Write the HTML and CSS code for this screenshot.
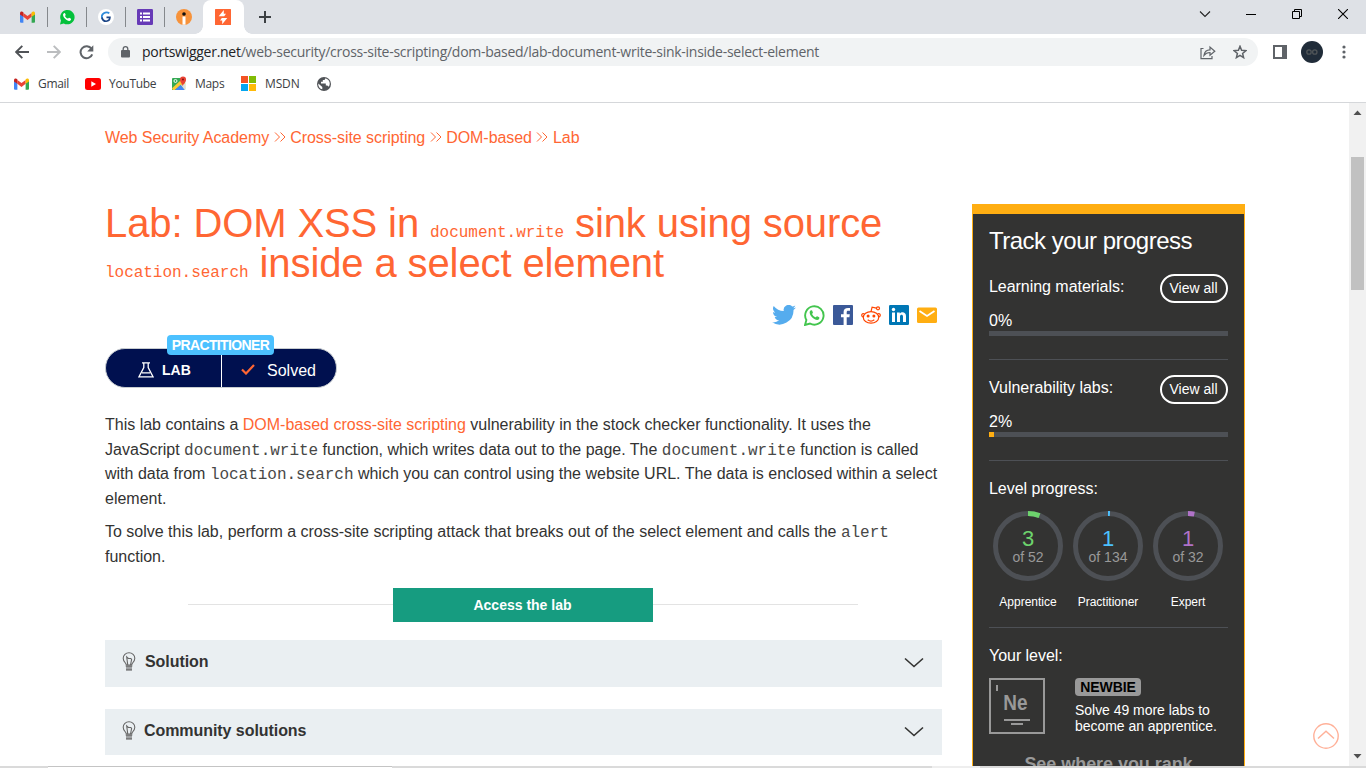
FILE: index.html
```html
<!DOCTYPE html>
<html lang="en">
<head>
<meta charset="utf-8">
<title>Lab: DOM XSS in document.write sink</title>
<link rel="stylesheet" href="styles.css">
</head>
<body>
<svg class="defs" width="0" height="0">
  <symbol id="gmail" viewBox="0 0 16 12">
    <path d="M0 1.8V11a1 1 0 0 0 1 1h2.6V5z" fill="#4285f4"/>
    <path d="M16 1.8V11a1 1 0 0 1-1 1h-2.6V5z" fill="#34a853"/>
    <path d="M3.6 1.6 8 5l4.4-3.4v4.2L8 9.2 3.600 5.800z" fill="#ea4335"/>
    <path d="M0 2C0 .2 2 -.4 3.600 1v4.800L0 3.200z" fill="#c5221f"/>
    <path d="M16 2C16 .2 14 -.4 12.400 1v4.800L16 3.200z" fill="#fbbc04"/>
  </symbol>
  <symbol id="bulb" viewBox="0 0 14 19">
    <path d="M4.300 13C4.300 10.800 1.200 9.800 1.200 6.200a5.800 5.400 0 0 1 11.600 0C12.800 9.800 9.700 10.800 9.700 13zM5.700 12.500 4.700 5l1.700 1.500h2.400l.8 1-1 5" fill="none" stroke="#666" stroke-width="1.100"/>
    <path d="M3.800 14.200h6.400M4 16h6M4 17.800h6" stroke="#555" stroke-width="1.200"/>
  </symbol>
</svg>

<header class="tabs">
  <div class="tab"><svg width="15" height="12"><use href="#gmail"/></svg></div>
  <div class="tab"><svg width="16" height="16" viewBox="0 0 16 16"><path d="M1 15.500 2 11.500A7.200 7.200 0 1 1 4.800 14.400z" fill="#05c13c"/><path d="M5.300 3.900c-2 .8-1.400 3.500.6 5.600 2.200 2.400 4.800 3.300 5.900 1.500.5-1 .3-1.300-.2-1.500l-1.500-.7c-.6-.2-.8.9-1.300.8-1.300-.3-2.500-1.600-2.800-2.600 0-.4.9-.7.700-1.300L6 4.200q-.2-.4-.7-.3z" fill="#fff"/></svg></div>
  <div class="tab"><svg width="16" height="16" viewBox="0 0 16 16"><circle cx="8" cy="8" r="8" fill="#fff"/><path d="M11.300 4.200C8 1.800 2.200 5 4.300 9.800" fill="none" stroke="#2e8bda" stroke-width="1.700"/><path d="M4 8.500C5 13.800 11.800 13.200 11.900 8.300H8.500" fill="none" stroke="#1c4587" stroke-width="1.700"/></svg></div>
  <div class="tab"><svg width="16" height="16" viewBox="0 0 16 16"><rect width="16" height="16" rx="1.200" fill="#673ab7"/><path d="M3 4.500h2M3 8h2M3 11.500h2M6 4.500h7M6 8h7M6 11.500h7" stroke="#fff" stroke-width="1.800"/></svg></div>
  <div class="tab last"><svg width="16" height="16" viewBox="0 0 16 16"><circle cx="8" cy="8" r="8" fill="#f7923a"/><circle cx="8" cy="5" r="1.800" fill="#111"/><path d="M6.500 7.500h3v8.200h-3z" fill="#fff"/></svg></div>
  <div class="tab active"><svg width="16" height="16" viewBox="0 0 16 16"><rect width="16" height="16" rx=".5" fill="#ff6633"/><path d="M8.800 1v3.700H11L9.200 7.300H3.700zM7.200 15.200v-3.700H5L6.800 8.900h5.500z" fill="#fff"/></svg></div>
  <svg class="plus" width="12" height="12" viewBox="0 0 12 12"><path d="M6 0v12M0 6h12" stroke="#3c4043" stroke-width="2"/></svg>
  <div class="window">
    <svg width="12" height="8" viewBox="0 0 12 8"><path d="M1 1.500 6 6.500 11 1.500" fill="none" stroke="#222" stroke-width="1.100"/></svg>
    <svg width="10" height="10" viewBox="0 0 10 10"><path d="M0 5.500h10" stroke="#000"/></svg>
    <svg width="10" height="10" viewBox="0 0 10 10"><path d="M.5 2.500h7v7h-7zM2.500 2V.5h7v7H8" fill="none" stroke="#000"/></svg>
    <svg width="10" height="10" viewBox="0 0 10 10"><path d="m0 0 10 10M10 0 0 10" stroke="#000" stroke-width="1.100"/></svg>
  </div>
</header>

<div class="toolbar">
  <svg width="14" height="14" viewBox="0 0 14 14"><path d="M14 7H1.500M7.300.8 1.200 7l6.100 6.200" fill="none" stroke="#505357" stroke-width="1.900"/></svg>
  <svg class="fwd" width="14" height="14" viewBox="0 0 14 14"><path d="M0 7h12.500M6.700.8 12.800 7l-6.100 6.200" fill="none" stroke="#bbbdbf" stroke-width="1.900"/></svg>
  <svg class="reload" width="15" height="15" viewBox="0 0 15 15"><path d="M12.500 3.800A6 6 0 1 0 13.200 9.300" fill="none" stroke="#5f6368" stroke-width="2"/><path d="M14.300.3v6.100H8.200z" fill="#5f6368"/></svg>
  <div class="omnibox">
    <svg width="9" height="12" viewBox="0 0 9 12"><rect y="4" width="9" height="7.500" rx="1" fill="#5f6368"/><path d="M2.200 4.500V3a2.300 2.300 0 0 1 4.600 0v1.500" fill="none" stroke="#5f6368" stroke-width="1.300"/></svg>
    <span class="url"><b>portswigger.net</b>/web-security/cross-site-scripting/dom-based/lab-document-write-sink-inside-select-element</span>
    <svg class="share" width="16" height="15" viewBox="0 0 16 15"><path d="M3.500 3.500H1v10.200h11V11M4 10.300c.5-4 2.500-5.500 6-5.500V2l4.800 4.200-4.800 4V7.500c-2.500 0-4.300.5-6 2.800z" fill="none" stroke="#5f6368" stroke-width="1.200"/></svg>
    <svg class="star" width="14" height="14" viewBox="0 0 14 14"><path d="m7 1.300 1.600 4 4.300.3-3.300 2.800 1 4.200L7 10.300l-3.600 2.300 1-4.200L1.100 5.600l4.300-.3z" fill="none" stroke="#5f6368" stroke-width="1.500"/></svg>
  </div>
  <svg class="panel" width="14" height="14" viewBox="0 0 14 14"><path d="M1 1h12v12H1z" fill="#fff" stroke="#5f6368" stroke-width="2"/><path d="M9 1h4v12H9z" fill="#5f6368"/></svg>
  <svg class="avatar" width="22" height="22" viewBox="0 0 22 22"><circle cx="11" cy="11" r="11" fill="#202c39"/><circle cx="8" cy="11" r="2.200" fill="none" stroke="#505558" stroke-width="1.300"/><circle cx="13.800" cy="11" r="2.200" fill="none" stroke="#505558" stroke-width="1.300"/></svg>
  <svg class="menu" width="4" height="14" viewBox="0 0 4 14"><g fill="#5f6368"><circle cx="2" cy="2" r="1.600"/><circle cx="2" cy="7" r="1.600"/><circle cx="2" cy="12" r="1.600"/></g></svg>
</div>

<nav class="bookmarks">
  <a class="bm gm"><svg width="15" height="12"><use href="#gmail"/></svg><span>Gmail</span></a>
  <a class="bm yt"><svg width="16" height="12" viewBox="0 0 16 12"><rect width="16" height="12" rx="2.500" fill="#f00"/><path d="M6.300 3.300v5.400L11 6z" fill="#fff"/></svg><span>YouTube</span></a>
  <a class="bm mp"><svg width="15" height="15" viewBox="0 0 16 16"><rect y="2" width="14" height="13" rx="1" fill="#34a853"/><path d="M0 13 10 4l4 4v6l-4-5-7 6H1z" fill="#fbc934"/><path d="m3 15 6-5.500 5 5.500z" fill="#4285f4"/><path d="m9.500 9.500 4 5.500h.5V8z" fill="#ddd"/><circle cx="3.700" cy="5.300" r="1.600" fill="none" stroke="#fff" stroke-width="1"/><path d="M11.500 11C11 8 8.500 7 8.500 3.800a3.200 3.200 0 0 1 6.500 0C15 7 12 8 11.500 11z" fill="#ea4335"/><circle cx="11.700" cy="3.800" r="1.100" fill="#811"/></svg><span>Maps</span></a>
  <a class="bm ms"><svg width="15" height="15" viewBox="0 0 15 15"><path d="M0 0h7v7H0z" fill="#f35325"/><path d="M8 0h7v7H8z" fill="#81bc06"/><path d="M0 8h7v7H0z" fill="#05a6f0"/><path d="M8 8h7v7H8z" fill="#ffba08"/></svg><span>MSDN</span></a>
  <svg class="globe" width="14" height="14" viewBox="0 0 14 14"><circle cx="7" cy="7" r="7" fill="#505357"/><path d="M8.500 1.300 7.500 3H5.800v1.800H4v1.700h4.800v2h1.500l1.500 1.300c2-3 1-7-3.300-8.500zM1.300 6.500l4 3.500v2.300C3 12 1 9.500 1.300 6.500z" fill="#fff"/></svg>
</nav>

<div class="viewport">
  <div class="page">
    <main>
      <div class="crumbs">
        <span>Web Security Academy</span>
        <svg width="12" height="10" viewBox="0 0 12 10"><path d="m1 .5 4.500 4.500L1 9.500M6.500.5 11 5 6.500 9.500" fill="none" stroke="#ff6633"/></svg>
        <span>Cross-site scripting</span>
        <svg width="12" height="10" viewBox="0 0 12 10"><path d="m1 .5 4.500 4.500L1 9.500M6.500.5 11 5 6.500 9.500" fill="none" stroke="#ff6633"/></svg>
        <span>DOM-based</span>
        <svg width="12" height="10" viewBox="0 0 12 10"><path d="m1 .5 4.500 4.500L1 9.500M6.500.5 11 5 6.500 9.500" fill="none" stroke="#ff6633"/></svg>
        <span>Lab</span>
      </div>
      <h1>Lab: DOM XSS in <code>document.write</code> sink using source<br><code>location.search</code> inside a select element</h1>
      <div class="social">
        <svg width="24" height="20" viewBox="0 0 24 20"><path d="M24 2.400a10 10 0 0 1-2.800.8A5 5 0 0 0 23.300.4a10 10 0 0 1-3.100 1.200 4.900 4.900 0 0 0-8.400 4.500A14 14 0 0 1 1.700.9a4.900 4.900 0 0 0 1.500 6.600 5 5 0 0 1-2.200-.6c0 2.400 1.600 4.400 3.900 4.900a5 5 0 0 1-2.200.1 4.900 4.900 0 0 0 4.600 3.400A10 10 0 0 1 0 17.300a14 14 0 0 0 21.500-12.400q1.500-1.100 2.500-2.500z" fill="#55acee"/></svg>
        <svg width="21" height="21" viewBox="0 0 21 21"><path d="m1 20 1.400-5A9.200 9.200 0 1 1 6 18.500z" fill="none" stroke="#43c54e" stroke-width="1.900"/><path d="M7 5.300c-2.400 1.200-1.200 4.700 1.300 7.200 2.700 2.600 5.600 3.400 6.800 1.400.6-1.400.2-1.600-.4-1.900l-1.600-.8c-.7-.2-1 1.200-1.500 1.100-1.600-.5-3-1.900-3.500-3.200 0-.5 1-.9.800-1.500L8.100 5.600q-.3-.6-1.100-.3z" fill="#43c54e"/></svg>
        <svg width="20" height="20" viewBox="0 0 20 20"><rect width="20" height="20" rx="1" fill="#3b5998"/><path d="M13.700 20v-7.700h2.700l.4-3h-3.100v-2c0-.9.300-1.500 1.500-1.500H17V3.100c-4-.6-6.400.5-6.400 3.800v2.400H8v3h2.600V20z" fill="#fff"/></svg>
        <svg width="20" height="20" viewBox="0 0 20 20"><g fill="none" stroke="#ff4500" stroke-width="1.200"><ellipse cx="10" cy="12.400" rx="7.700" ry="5.800"/><path d="M3.500 9.200C1.800 7.200-.6 10 1.900 12.100M16.500 9.200c1.700-2 4.100.8 1.600 2.900M10 6.600l1.100-4.500 4.300 1M6.700 14.700c2 1.600 4.600 1.600 6.600 0"/><circle cx="17" cy="3.300" r="1.500"/></g><circle cx="7.100" cy="11" r="1.500" fill="#ff4500"/><circle cx="12.900" cy="11" r="1.500" fill="#ff4500"/></svg>
        <svg width="20" height="20" viewBox="0 0 20 20"><rect width="20" height="20" rx="1.200" fill="#0077b5"/><path d="M3 7.500h3V17H3zM8 7.500h2.800v1.300C12.500 6.300 17 7 17 11v6h-3v-5.500c0-2.500-3-2.300-3 0V17H8z" fill="#fff"/><circle cx="4.500" cy="4.500" r="1.700" fill="#fff"/></svg>
        <svg width="20" height="20" viewBox="0 0 20 20"><rect y="2.500" width="20" height="15.500" rx="1.500" fill="#ffae12"/><path d="m2.500 6 7.500 5 7.500-5" fill="none" stroke="#fff" stroke-width="1.800"/></svg>
      </div>
      <div class="status">
        <div class="half lab"><svg width="16" height="16" viewBox="0 0 16 16"><path d="M4 .8h8M5.800 1v4.500L1 14.800h14L10.200 5.500V1M4 10.800h8" fill="none" stroke="#fff" stroke-width="1.300"/></svg><b>LAB</b></div>
        <div class="half solved"><svg width="14" height="11" viewBox="0 0 14 11"><path d="m1 5.500 4 4L13 1" fill="none" stroke="#ff6633" stroke-width="2.200"/></svg><span>Solved</span></div>
        <span class="rank">PRACTITIONER</span>
      </div>
      <p class="p1">This lab contains a <a>DOM-based cross-site scripting</a> vulnerability in the stock checker functionality. It uses the<br>JavaScript <code>document.write</code> function, which writes data out to the page. The <code>document.write</code> function is called<br>with data from <code>location.search</code> which you can control using the website URL. The data is enclosed within a select<br>element.</p>
      <p class="p2">To solve this lab, perform a cross-site scripting attack that breaks out of the select element and calls the <code>alert</code><br>function.</p>
      <div class="access"><i></i><button>Access the lab</button><i></i></div>
      <div class="fold"><svg width="14" height="19"><use href="#bulb"/></svg><b>Solution</b><svg class="chev" width="20" height="12" viewBox="0 0 20 12"><path d="m1 1.500 9 8 9-8" fill="none" stroke="#333332" stroke-width="1.600"/></svg></div>
      <div class="fold second"><svg width="14" height="19"><use href="#bulb"/></svg><b>Community solutions</b><svg class="chev" width="20" height="12" viewBox="0 0 20 12"><path d="m1 1.500 9 8 9-8" fill="none" stroke="#333332" stroke-width="1.600"/></svg></div>
    </main>
    <aside>
      <h2>Track your progress</h2>
      <section class="prog">
        <div class="row"><span>Learning materials:</span><button>View all</button></div>
        <div class="pct">0%</div>
        <div class="bar"></div>
      </section>
      <section class="prog">
        <div class="row"><span>Vulnerability labs:</span><button>View all</button></div>
        <div class="pct">2%</div>
        <div class="bar"><i style="width:2%"></i></div>
      </section>
      <section class="levels">
        <div class="cap">Level progress:</div>
        <div class="rings">
          <div class="ring green"><div class="dial"><svg width="70" height="70" viewBox="0 0 70 70"><circle cx="35" cy="35" r="32.500"/><circle class="val" cx="35" cy="35" r="32.500" pathLength="52" stroke-dasharray="3 49"/></svg><b>3</b><span>of 52</span></div><em>Apprentice</em></div>
          <div class="ring blue"><div class="dial"><svg width="70" height="70" viewBox="0 0 70 70"><circle cx="35" cy="35" r="32.500"/><circle class="val" cx="35" cy="35" r="32.500" pathLength="134" stroke-dasharray="1.300 132.700"/></svg><b>1</b><span>of 134</span></div><em>Practitioner</em></div>
          <div class="ring purple"><div class="dial"><svg width="70" height="70" viewBox="0 0 70 70"><circle cx="35" cy="35" r="32.500"/><circle class="val" cx="35" cy="35" r="32.500" pathLength="32" stroke-dasharray="1 31"/></svg><b>1</b><span>of 32</span></div><em>Expert</em></div>
        </div>
      </section>
      <section class="level">
        <div class="cap">Your level:</div>
        <div class="who">
          <div class="badge"><u></u><b>Ne</b><i class="l1"></i><i class="l2"></i></div>
          <div class="desc"><span class="newbie">NEWBIE</span><p>Solve 49 more labs to<br>become an apprentice.</p></div>
        </div>
        <div class="see">See where you rank</div>
      </section>
    </aside>
    <svg class="top" width="26" height="26" viewBox="0 0 26 26"><circle cx="13" cy="13" r="12.200" fill="none" stroke="#ffb199" stroke-width="1.400"/><path d="m5 15.500 8-7.300 8 7.300" fill="none" stroke="#ffb199" stroke-width="1.400"/></svg>
  </div>
  <div class="scroll">
    <svg width="9" height="5" viewBox="0 0 9 5"><path d="M4.500.5 8.500 5h-8z" fill="#505050"/></svg>
    <div class="thumb"></div>
    <svg class="down" width="9" height="5" viewBox="0 0 9 5"><path d="M4.500 4.500 8.500 0h-8z" fill="#505050"/></svg>
  </div>
</div>
<footer><i></i><b></b><u></u><s></s></footer>
</body>
</html>
```

FILE: styles.css
```css
* { box-sizing: border-box; }
body { margin: 0; width: 1366px; height: 768px; overflow: hidden; display: flex; flex-direction: column; background: #fff; color: #333332; font: 16px "Liberation Sans", Arial, sans-serif; }
svg { display: block; flex: none; }
.defs { position: absolute; }
button { font-family: inherit; margin: 0; padding: 0; }
code { font: 16px/16px "Liberation Mono", "Courier New", monospace; letter-spacing: -.03px; }

/* browser chrome */
.tabs { height: 34px; flex: none; background: #dee1e6; display: flex; padding-left: 9px; }
.tab { width: 39px; height: 34px; display: flex; align-items: center; justify-content: center; padding-right: 2px; background: linear-gradient(#85888c, #85888c) right 7px/1px 20px no-repeat; }
.tab.last { width: 38px; background: none; padding: 0; }
.tab.active { width: 41px; background: #fff; border-radius: 8px 8px 0 0; position: relative; padding-right: 1px; }
.tab.active::before, .tab.active::after { content: ""; position: absolute; bottom: 0; width: 8px; height: 8px; }
.tab.active::before { left: -8px; background: radial-gradient(circle at 0 0, #dee1e6 7.5px, #fff 8px); }
.tab.active::after { right: -8px; background: radial-gradient(circle at 100% 0, #dee1e6 7.5px, #fff 8px); }
.plus { margin: 11px 0 0 15px; }
.window { margin-left: auto; display: flex; align-items: center; gap: 36px; height: 28px; padding-right: 18px; }
.window svg:first-child { margin-right: -1px; }

.toolbar { height: 36px; flex: none; display: flex; align-items: center; padding-left: 15px; }
.fwd { margin-left: 18px; }
.reload { margin-left: 18px; }
.omnibox { margin-left: 14px; width: 1150px; height: 28px; border-radius: 14px; background: #f1f3f4; display: flex; align-items: center; padding: 0 11px 0 13px; }
.url { margin: -1px 0 0 12px; font: 14px "Open Sans", "Noto Sans", sans-serif; letter-spacing: -0.265px; color: #5f6368; white-space: nowrap; }
.url b { font-weight: 400; color: #202124; }
.share { margin-left: auto; }
.star { margin-left: 17px; }
.panel { margin-left: 15px; }
.avatar { margin-left: 14px; }
.menu { margin-left: 19px; }

.bookmarks { height: 33px; flex: none; border-bottom: 1px solid #d5d7da; padding: 0 0 5px 14px; display: flex; align-items: center; font: 12px "Open Sans", "Noto Sans", sans-serif; letter-spacing: -.3px; color: #3c4043; }
.bm { display: flex; align-items: center; gap: 9px; white-space: nowrap; }
.gm { width: 71px; }
.yt { width: 87px; gap: 8px; }
.mp { width: 69px; gap: 8px; }
.ms { width: 76px; letter-spacing: -.15px; }

/* page */
.viewport { height: 663px; flex: none; display: flex; overflow: hidden; }
.page { width: 1349px; display: flex; padding-left: 105px; position: relative; }
main { width: 837px; }
.crumbs { display: flex; align-items: center; gap: 4.500px; height: 20px; margin-top: 25px; color: #ff6633; white-space: nowrap; letter-spacing: -.05px; }
.crumbs svg { margin: -2px 0 0 0; }
h1 { margin: 55px 0 0; font-weight: 400; font-size: 40px; line-height: 40px; letter-spacing: -.11px; color: #ff6633; white-space: nowrap; }
.social { display: flex; align-items: center; justify-content: flex-end; gap: 8px; height: 22px; margin-top: 21px; padding-right: 5px; }
.status { position: relative; margin-top: 22px; width: 232px; height: 40px; border: 1px solid #c8cdd0; border-radius: 20px; background: #00104f; color: #fff; display: flex; }
.half { display: flex; align-items: center; padding-top: 3px; }
.lab { width: 116px; padding-left: 32px; border-right: 1px solid #fff; gap: 8px; font-size: 14px; }
.solved { padding-left: 19px; gap: 12px; }
.solved span { padding-top: 2px; }
.rank { position: absolute; left: 61px; top: -14px; width: 107px; height: 20px; border-radius: 4px; background: #4cc1ff; font-weight: 700; font-size: 14px; line-height: 20px; text-align: center; letter-spacing: -.62px; }
p { margin: 0; line-height: 24.700px; white-space: nowrap; letter-spacing: -.004px; }
p code { color: #484847; }
.p1 { margin-top: 25px; }
.p1 a { color: #ff6633; }
.p2 { margin-top: 8px; }
.access { display: flex; justify-content: center; align-items: flex-start; margin: 19px 2px 18px 0; height: 34px; }
.access i { width: 205px; height: 1px; background: #e3e3e3; margin-top: 16px; }
.access button { width: 260px; height: 34px; border: 0; background: #169c80; color: #fff; font-weight: 700; font-size: 14px; }
.fold { height: 47px; background: #eaeff2; display: flex; padding: 12px 18px 0 17px; }
.fold b { margin: 0 0 0 9px; line-height: 20px; letter-spacing: -.06px; }
.chev { margin: 5px 0 0 auto; }
.second { margin-top: 22px; height: 46px; }
.second b { margin-left: 8px; }

aside { margin: 101px 0 0 30px; width: 273px; height: 562px; overflow: hidden; background: #333332; color: #fff; border: solid #ffae12; border-width: 10px 1px 0; padding: 0 16px; }
h2 { margin: 12px 0 0; font-weight: 400; font-size: 24px; line-height: 30px; letter-spacing: -.5px; white-space: nowrap; }
.prog { height: 101px; border-bottom: 1px solid #4d5055; padding-top: 15px; }
h2 + .prog { height: 104px; padding-top: 18px; }
.row { display: flex; justify-content: space-between; height: 29px; line-height: 26px; letter-spacing: -.04px; }
.row button { width: 68px; height: 29px; border: 2px solid #fff; border-radius: 15px; background: none; color: #fff; font-size: 14px; padding: 0 1px 2px 0; }
.pct { line-height: 20px; margin-top: 8px; }
.bar { height: 5px; background: #4d5055; }
.bar i { display: block; height: 5px; background: #ffae12; }
.levels { height: 167px; border-bottom: 1px solid #4d5055; padding-top: 18px; }
.cap { line-height: 20px; letter-spacing: -.04px; }
.rings { display: flex; margin: 12px 0 0 -1px; }
.ring { width: 80px; flex: none; display: flex; flex-direction: column; align-items: center; }
.dial { position: relative; width: 70px; height: 70px; display: flex; flex-direction: column; align-items: center; padding-top: 16px; }
.dial svg { position: absolute; left: 0; top: 0; transform: rotate(-90deg); }
.dial circle { fill: none; stroke: #4d5055; stroke-width: 5; }
.dial b { font-weight: 400; font-size: 22px; line-height: 23px; }
.dial span { font-size: 14px; line-height: 14px; color: #999; }
.green b { color: #6dd36d; }
.green .val { stroke: #6dd36d; }
.blue b { color: #4cc1ff; }
.blue .val { stroke: #4cc1ff; }
.purple b { color: #b072c8; }
.purple .val { stroke: #b072c8; }
.ring em { font-style: normal; font-size: 12px; line-height: 16px; margin-top: 13px; }
.level { padding-top: 18px; }
.who { display: flex; gap: 30px; margin-top: 12px; }
.badge { width: 56px; height: 56px; border: 2px solid #999; display: grid; grid-template-rows: 10px 23px 5px 4px; justify-items: center; padding-top: 5px; color: #999; }
.badge b { font-size: 22px; line-height: 24px; transform: scaleX(.86); padding-right: 4px; margin-top: -4px; }
.badge u { width: 2px; height: 6px; background: #999; justify-self: start; margin-left: 5px; }
.badge i { background: #999; height: 2px; }
.l1 { width: 26px; margin-top: 1px; }
.l2 { width: 12px; }
.newbie { display: block; width: 66px; height: 18px; border-radius: 4px; background: #999; color: #000; font-weight: 700; font-size: 14px; line-height: 18px; text-align: center; letter-spacing: -.06px; }
.desc p { font-size: 14px; line-height: 16px; margin-top: 6px; letter-spacing: -.03px; }
.see { margin-top: 19px; text-align: center; font-weight: 700; font-size: 18px; line-height: 22px; color: #999; white-space: nowrap; letter-spacing: -.05px; }
.top { position: absolute; right: 10px; bottom: 17px; }

.scroll { width: 17px; background: #f1f1f1; display: flex; flex-direction: column; align-items: center; padding: 7px 0; }
.thumb { width: 13px; height: 133px; background: #c1c1c1; margin-top: 42px; }
.down { margin-top: auto; }
footer { height: 2px; flex: none; display: flex; background: #dadada; }
footer i { width: 48px; }
footer b { width: 344px; background: #fff; border-top: 1px solid #c4c4c4; }
footer u { width: 48px; background: #eee; margin-left: 540px; }
footer s { flex: 1; }
```
